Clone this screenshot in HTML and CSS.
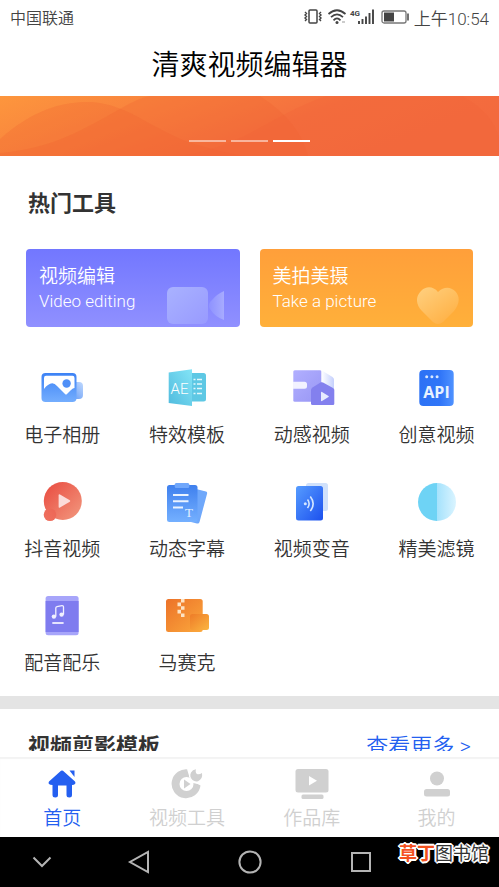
FILE: index.html
```html
<!DOCTYPE html>
<html lang="zh-CN">
<head>
    <meta charset="utf-8">
    <meta name="viewport" content="width=device-width, initial-scale=1">
    <title>清爽视频编辑器</title>
    <link rel="stylesheet" href="styles.css">
</head>
<body>
    <div class="status-bar">
        <span>中国联通</span>
        <div class="status-right">
            <svg width="74" height="20" viewBox="0 0 74 20" fill="none" stroke="#444">
                <rect x="7" y="3" width="8" height="13" rx="1" stroke-width="1.5"/>
                <path d="M3 5l1.500 1.500L3 8l1.500 1.500L3 11l1.500 1.500L3 14M19 5l-1.500 1.500L19 8l-1.500 1.500L19 11l-1.500 1.500L19 14" stroke-width="1.4"/>
                <path d="M26.500 7Q35 -.5 43.500 7M29 10.200Q35 4.500 41 10.200M31.500 13.300Q35 9.500 38.500 13.300" stroke-width="1.7"/>
                <circle cx="35" cy="15.500" r="1.500" fill="#444" stroke="none"/>
                <path d="M40 15h3" stroke="#999"/>
                <text x="48" y="9" class="net">4G</text>
                <path d="M57 17v-3M60.500 17v-5M64 17v-7.500M67.500 17V6M71 17V2.500" stroke-width="1.9"/>
            </svg>
            <svg width="28" height="20" viewBox="0 0 28 20">
                <rect x="1" y="4" width="24" height="12" rx="2" fill="none" stroke="#777" stroke-width="1.3"/>
                <path d="M3 5.500h10v9H3z" fill="#444"/>
                <path d="M27 6.500v7" stroke="#444" stroke-width="1.5"/>
            </svg>
            <span class="time">上午10:54</span>
        </div>
    </div>

    <h1>清爽视频编辑器</h1>

    <div class="banner">
        <svg class="waves" viewBox="0 0 499 60" preserveAspectRatio="none">
            <defs>
                <linearGradient id="bn" x1="0" y1="0" x2="1" y2=".3">
                    <stop offset="0" stop-color="#fd963d"/>
                    <stop offset=".35" stop-color="#f8813e"/>
                    <stop offset=".65" stop-color="#f46f3e"/>
                    <stop offset="1" stop-color="#f36a3e"/>
                </linearGradient>
            </defs>
            <path d="M0 0h499v60H0z" fill="url(#bn)"/>
            <path d="M0 43C35 12 65 5 92 6C128 9 146 29 188 46Q220 56 245 60H0z" fill="#f0602f" opacity=".25"/>
            <path d="M0 57C55 52 85 32 120 13Q138 2 150 0H260Q300 26 308 60H0z" fill="#f0602f" opacity=".25"/>
            <path d="M180 60C245 50 270 20 326 0H462Q492 16 499 42V60z" fill="#f26238" opacity=".3"/>
        </svg>
        <div class="dots"><i></i><i></i><i class="on"></i></div>
    </div>

    <main>
        <section class="tools">
            <h2>热门工具</h2>
            <div class="cards">
                <button class="card card-video">
                    <span>视频编辑</span>
                    <small>Video editing</small>
                    <svg class="card-icon" width="60" height="40" viewBox="0 0 60 40">
                        <defs>
                            <linearGradient id="cm" x1="0" y1="0" x2="1" y2="1">
                                <stop offset="0" stop-color="#a9b2ff"/>
                                <stop offset="1" stop-color="#989aff"/>
                            </linearGradient>
                            <linearGradient id="cm2">
                                <stop offset="0" stop-color="#8e92ff"/>
                                <stop offset="1" stop-color="#a7abff"/>
                            </linearGradient>
                        </defs>
                        <path d="M57 5v29Q48 31 43 23Q40 18 45 14Q50 8 57 5z" fill="url(#cm2)"/>
                        <rect y="1" width="41" height="37" rx="6" fill="url(#cm)"/>
                    </svg>
                </button>
                <button class="card card-photo">
                    <span>美拍美摄</span>
                    <small>Take a picture</small>
                    <svg class="card-icon" width="60" height="40" viewBox="0 0 60 40">
                        <defs>
                            <linearGradient id="ht" x1="0" y1="0" x2=".8" y2="1">
                                <stop offset="0" stop-color="#ffd080"/>
                                <stop offset="1" stop-color="#ffb043"/>
                            </linearGradient>
                        </defs>
                        <path d="M21 6C27 0 34 1 38 5C44 11 42 19 37 25L26 36Q21 40 16 36L5 25C-1 19-2 11 4 5C9 0 16 0 21 6z" fill="url(#ht)"/>
                    </svg>
                </button>
            </div>

            <div class="grid">
                <a href="#">
                    <svg width="48" height="44" viewBox="0 0 48 44">
                        <defs>
                            <linearGradient id="a1" x1="0" y1="0" x2="0" y2="1">
                                <stop offset="0" stop-color="#3d82f5"/>
                                <stop offset="1" stop-color="#74aefe"/>
                            </linearGradient>
                            <linearGradient id="a2" x1="0" y1="1" x2="1" y2="0">
                                <stop offset="0" stop-color="#5893f5"/>
                                <stop offset="1" stop-color="#c0d9fe"/>
                            </linearGradient>
                        </defs>
                        <rect x="30" y="16" width="15" height="17" rx="4" fill="url(#a2)"/>
                        <rect x="3.500" y="7" width="35" height="29" rx="4" fill="url(#a1)"/>
                        <path d="M6 23V12Q6 9.800 8 9.800H34.500Q36.500 9.800 36.500 12V22Q35 22 33 24L29 28Q28 29 27 28L19 20Q15 15 10 19Q8 20 6 23z" fill="#fff"/>
                        <circle cx="28.600" cy="17.500" r="4.200" fill="#4f8ff7"/>
                    </svg>
                    <span>电子相册</span>
                </a>
                <a href="#">
                    <svg width="48" height="44" viewBox="0 0 48 44">
                        <defs>
                            <linearGradient id="b1" x1="1" y1="0" x2="0" y2="1">
                                <stop offset="0" stop-color="#83e4f6"/>
                                <stop offset="1" stop-color="#50bbde"/>
                            </linearGradient>
                        </defs>
                        <rect x="24" y="7" width="19" height="28.500" rx="2.500" fill="#5ec8e4"/>
                        <path d="M5.700 6.500L29 3.200V40L5.700 37z" fill="url(#b1)"/>
                        <path d="M30.500 13.500h2M34 13.500h5M30.500 18h2M34 18h5M30.500 22.500h2M34 22.500h5M30.500 27.500h2M34 27.500h5" stroke="#e3f8fc" stroke-width="1.4"/>
                        <text x="7.500" y="27.500" class="ae">AE</text>
                    </svg>
                    <span>特效模板</span>
                </a>
                <a href="#">
                    <svg width="48" height="44" viewBox="0 0 48 44">
                        <defs>
                            <linearGradient id="c1" x1="0" y1="0" x2="1" y2="1">
                                <stop offset="0" stop-color="#b1afff"/>
                                <stop offset="1" stop-color="#9896f4"/>
                            </linearGradient>
                            <linearGradient id="c2">
                                <stop offset="0" stop-color="#fff"/>
                                <stop offset="1" stop-color="#c5d0fd"/>
                            </linearGradient>
                        </defs>
                        <rect x="5.300" y="4.300" width="28.300" height="31.400" rx="1.500" fill="url(#c1)"/>
                        <path d="M5 15.700h11.500a2.500 2.500 0 0 1 2.500 2.500v2a2.500 2.500 0 0 1-2.500 2.500H5z" fill="#f2f2ff"/>
                        <path d="M33.500 4.300L44.500 11Q46 12 46 13.500V24L33.500 16z" fill="url(#c2)"/>
                        <path d="M23 24Q23 22.500 24.500 21.500L32.500 16.500Q33.700 15.800 35 16.500L45 22Q46.300 23 46.300 24V37.500Q46.300 39 45 39H24.500Q23 39 23 37.500z" fill="#8380ee"/>
                        <path d="M33 26.500Q33 25.500 34 26L40.500 30Q41.300 30.500 40.500 31L34 35Q33 35.500 33 34.500z" fill="#e7ebff"/>
                    </svg>
                    <span>动感视频</span>
                </a>
                <a href="#">
                    <svg width="48" height="44" viewBox="0 0 48 44">
                        <defs>
                            <linearGradient id="d1" x1="0" y1="0" x2="1" y2="0">
                                <stop offset="0" stop-color="#2c72f5"/>
                                <stop offset=".6" stop-color="#3075f8"/>
                                <stop offset="1" stop-color="#4f92ff"/>
                            </linearGradient>
                        </defs>
                        <rect x="6.300" y="4" width="34.400" height="36" rx="4" fill="url(#d1)"/>
                        <circle cx="13.700" cy="10.700" r="1.500" fill="#d6e7ff"/>
                        <circle cx="18.900" cy="10.700" r="1.500" fill="#d6e7ff"/>
                        <circle cx="24.100" cy="10.700" r="1.500" fill="#d6e7ff"/>
                        <text x="23.500" y="32" class="api">API</text>
                    </svg>
                    <span>创意视频</span>
                </a>
                <a href="#">
                    <svg width="48" height="44" viewBox="0 0 48 44">
                        <defs>
                            <linearGradient id="e1" x1="0" y1="0" x2="1" y2="1">
                                <stop offset="0" stop-color="#e9493e"/>
                                <stop offset="1" stop-color="#f29a80"/>
                            </linearGradient>
                            <linearGradient id="e2" x1="0" y1="1" x2="1" y2="0">
                                <stop offset="0" stop-color="#f0705f"/>
                                <stop offset="1" stop-color="#ec6655"/>
                            </linearGradient>
                        </defs>
                        <circle cx="24.800" cy="21" r="19" fill="url(#e1)"/>
                        <circle cx="12" cy="34.700" r="6.300" fill="url(#e2)"/>
                        <path d="M20.600 15.500Q20.600 13.800 22 14.500L31.800 20.200Q32.800 21 31.800 21.800L22 27.500Q20.600 28.200 20.600 26.500z" fill="#fbdcd9"/>
                    </svg>
                    <span>抖音视频</span>
                </a>
                <a href="#">
                    <svg width="48" height="44" viewBox="0 0 48 44">
                        <defs>
                            <linearGradient id="f1" x1="0" y1="0" x2="0" y2="1">
                                <stop offset="0" stop-color="#3f80ee"/>
                                <stop offset="1" stop-color="#74b0ff"/>
                            </linearGradient>
                        </defs>
                        <path d="M33 9L43 11.500Q44.600 12 44 14L36.500 42Q36 44 34 43.500L24 41z" fill="#6fa8fb"/>
                        <rect x="4" y="5" width="30.500" height="37" rx="2.500" fill="url(#f1)"/>
                        <rect x="11.700" y="3" width="14.600" height="5" rx="1.500" fill="#70a7fb"/>
                        <path d="M10 15h15.500M10 21.300h15.500M10 27.600h10" stroke="#eaf3ff" stroke-width="2"/>
                        <text x="22" y="36.500" class="tt">T</text>
                    </svg>
                    <span>动态字幕</span>
                </a>
                <a href="#">
                    <svg width="48" height="44" viewBox="0 0 48 44">
                        <defs>
                            <linearGradient id="g1" x1="0" y1="0" x2="1" y2="1">
                                <stop offset="0" stop-color="#569cff"/>
                                <stop offset="1" stop-color="#1c50ee"/>
                            </linearGradient>
                        </defs>
                        <rect x="18" y="3" width="22" height="28" rx="2.500" fill="#d0e1fb"/>
                        <rect x="8" y="6" width="27" height="34.500" rx="2.500" fill="url(#g1)"/>
                        <circle cx="17.300" cy="23.700" r="1.500" fill="#d4e6ff"/>
                        <path d="M19.500 19.500Q22.800 23.700 19.500 28M22.300 16.500Q28 23.700 22.300 31" fill="none" stroke="#d4e6ff" stroke-width="1.6"/>
                    </svg>
                    <span>视频变音</span>
                </a>
                <a href="#">
                    <svg width="48" height="44" viewBox="0 0 48 44">
                        <defs>
                            <linearGradient id="h1">
                                <stop offset="0" stop-color="#a5e2fc"/>
                                <stop offset="1" stop-color="#daf4ff"/>
                            </linearGradient>
                        </defs>
                        <path d="M24 3a19 19 0 0 1 0 38z" fill="url(#h1)"/>
                        <path d="M24 3a19 19 0 0 0 0 38z" fill="#6ed3f5"/>
                    </svg>
                    <span>精美滤镜</span>
                </a>
                <a href="#">
                    <svg width="48" height="44" viewBox="0 0 48 44">
                        <rect x="7.600" y="2" width="33" height="39.300" rx="2.500" fill="#a7a5fa"/>
                        <path d="M7.600 7h33v31h-33z" fill="#7f7cef"/>
                        <path d="M17.800 22.500V14Q17.800 13 19 12.700L24 11.600Q25.500 11.500 25.500 13V20.500" fill="none" stroke="#f1f0ff" stroke-width="1.3"/>
                        <circle cx="15.900" cy="22.600" r="2.200" fill="#f1f0ff"/>
                        <circle cx="23.600" cy="20.600" r="2.200" fill="#f1f0ff"/>
                        <path d="M14.300 29h11.300" stroke="#f1f0ff" stroke-width="1.8"/>
                    </svg>
                    <span>配音配乐</span>
                </a>
                <a href="#">
                    <svg width="48" height="44" viewBox="0 0 48 44">
                        <defs>
                            <linearGradient id="i1" x1="0" y1="0" x2="1" y2="1">
                                <stop offset="0" stop-color="#ec7229"/>
                                <stop offset="1" stop-color="#fba83c"/>
                            </linearGradient>
                            <linearGradient id="i2" x1="0" y1="0" x2="1" y2="1">
                                <stop offset="0" stop-color="#ee7b28"/>
                                <stop offset="1" stop-color="#fbb540"/>
                            </linearGradient>
                        </defs>
                        <rect x="3" y="5" width="36.700" height="33" rx="2.500" fill="url(#i1)"/>
                        <path d="M18 5h3.500v3.600H18zM14.500 8.600H18v3.600h-3.500zM18 12.200h3.500v3.600H18zM14.500 15.800H18v3.600h-3.500zM18 19.400h3.500V23H18z" fill="#fde3c4"/>
                        <rect x="27" y="20" width="19" height="16" rx="2.500" fill="url(#i2)"/>
                    </svg>
                    <span>马赛克</span>
                </a>
            </div>
        </section>

        <section class="templates">
            <h2>视频剪影模板</h2>
            <a href="#">查看更多 &gt;</a>
        </section>
    </main>

    <nav class="tab-bar">
        <a href="#" class="active">
            <svg width="36" height="32" viewBox="0 0 36 32" fill="currentColor">
                <path d="M17 2.800Q18 2 19 2.800L31 13.500Q32 15 31 16Q30 17 28 17V27Q28 29.500 25.300 29.500Q22.500 29.500 22.500 27V17.500H14V27Q14 29.500 11.300 29.500Q8.500 29.500 8.500 27V17Q6 17 5 16Q4 15 5 13.500z"/>
                <path d="M25.500 2.500H30.500V9z"/>
            </svg>
            <span>首页</span>
        </a>
        <a href="#">
            <svg width="36" height="32" viewBox="0 0 36 32">
                <path d="M20 1.500A14.500 14.500 0 1 0 31.500 17.500L26 14.500L20 9z" fill="currentColor"/>
                <circle cx="17.500" cy="16" r="7" fill="#fff"/>
                <path d="M15 11.500L21.500 16L15 20.500z" fill="currentColor"/>
                <path d="M19 1L21.500 9L24.500 14L34 16" fill="none" stroke="#fff" stroke-width="2"/>
                <path d="M27 1.200Q26 4.500 28 6Q30 7 33 5Q34 11 29 13.200Q26 14 23.500 12Q20 8.500 22 4.500Q23.500 1.500 27 1.200z" fill="currentColor"/>
            </svg>
            <span>视频工具</span>
        </a>
        <a href="#">
            <svg width="36" height="32" viewBox="0 0 36 32">
                <rect x="1.500" y="1" width="33" height="23.500" rx="2.500" fill="currentColor"/>
                <rect x="7.500" y="26.500" width="22" height="4.500" rx="1.500" fill="currentColor"/>
                <path d="M15 8L23 12.700L15 17.500z" fill="#fff"/>
            </svg>
            <span>作品库</span>
        </a>
        <a href="#">
            <svg width="36" height="32" viewBox="0 0 36 32" fill="currentColor">
                <circle cx="18" cy="10.500" r="7"/>
                <rect x="5" y="21" width="26" height="7.500" rx="2.500"/>
            </svg>
            <span>我的</span>
        </a>
    </nav>

    <footer class="system-bar">
        <button aria-label="收起">
            <svg width="24" height="24" viewBox="0 0 24 24"><path d="M3.500 7.500L12 16L20.500 7.500"/></svg>
        </button>
        <button aria-label="返回">
            <svg width="24" height="24" viewBox="0 0 24 24"><path d="M21 2V22L3 12z"/></svg>
        </button>
        <button aria-label="主页">
            <svg width="24" height="24" viewBox="0 0 24 24"><circle cx="12" cy="12" r="10.600"/></svg>
        </button>
        <button aria-label="最近任务">
            <svg width="24" height="24" viewBox="0 0 24 24"><rect x="3" y="3" width="18" height="18"/></svg>
        </button>
        <div class="mark"><b>草丁</b>图书馆</div>
    </footer>
</body>
</html>
```
FILE: styles.css
```css
* {
    box-sizing: border-box;
}
body {
    display: flex;
    flex-direction: column;
    height: 100vh;
    margin: 0;
    background-color: #fff;
    color: #333;
    font-family: Roboto, "Noto Sans CJK SC", sans-serif;
    font-size: 19px;
    font-weight: 350;
    overflow: hidden;
}
a {
    color: inherit;
    text-decoration: none;
}
button {
    padding: 0;
    border: none;
    background: none;
    font: inherit;
    cursor: pointer;
}
svg {
    display: block;
}
h1, h2 {
    margin: 0;
}

/* status bar */
.status-bar {
    display: flex;
    justify-content: space-between;
    align-items: center;
    height: 34px;
    padding: 0 10px;
    color: #444;
    font-size: 16px;
    flex-shrink: 0;
}
.status-right {
    display: flex;
    align-items: center;
    gap: 5px;
}
.time {
    font-size: 17px;
}
.net {
    fill: #444;
    stroke: none;
    font-size: 8px;
    font-weight: bold;
}

h1 {
    height: 62px;
    color: #000;
    font-size: 28px;
    font-weight: 350;
    line-height: 64px;
    text-align: center;
    flex-shrink: 0;
}

/* banner */
.banner {
    position: relative;
    height: 60px;
    flex-shrink: 0;
}
.waves {
    width: 100%;
    height: 60px;
}
.dots {
    position: absolute;
    left: 0;
    right: 0;
    bottom: 14px;
    display: flex;
    justify-content: center;
    gap: 5px;
}
.dots i {
    width: 37px;
    height: 2px;
    background-color: rgba(255, 255, 255, 0.5);
}
.dots .on {
    background-color: #fff;
}

main {
    flex: 1;
    min-height: 0;
    overflow: hidden;
}
h2 {
    color: #333;
    font-size: 22px;
    font-weight: 700;
    line-height: 30px;
}
.tools {
    padding: 33px 0 18px;
}
.tools h2 {
    padding: 0 28px;
}

/* cards */
.cards {
    display: grid;
    grid-template-columns: 1fr 1fr;
    gap: 20px;
    padding: 30px 26px 39px;
}
.card {
    position: relative;
    display: flex;
    flex-direction: column;
    justify-content: center;
    height: 78px;
    padding: 0 13px;
    border-radius: 4px;
    color: #fff;
    text-align: left;
}
.card span {
    line-height: 26px;
}
.card small {
    font-size: 17px;
    line-height: 22px;
}
.card-video {
    background: linear-gradient(#7277ff, #9090ff);
}
.card-photo {
    background: linear-gradient(#ff9f3a, #ffb03a);
}
.card-icon {
    position: absolute;
    right: 13px;
    bottom: 1px;
}
.card-photo .card-icon {
    right: -4px;
}

/* tools grid */
.grid {
    display: grid;
    grid-template-columns: repeat(4, 1fr);
    row-gap: 30px;
}
.grid a {
    display: flex;
    flex-direction: column;
    align-items: center;
    gap: 12px;
    line-height: 28px;
}
.ae {
    fill: #fff;
    font-size: 15px;
}
.api {
    fill: #e8f2ff;
    font-family: "Open Sans", sans-serif;
    font-size: 16px;
    font-weight: bold;
    text-anchor: middle;
}
.tt {
    fill: #e3f0ff;
    font-family: "Liberation Serif", serif;
    font-size: 13px;
}

.templates {
    display: flex;
    justify-content: space-between;
    padding: 23px 28px;
    border-top: 13px solid #e4e4e4;
}
.templates a {
    color: #245ff0;
    font-size: 22px;
    line-height: 30px;
}

/* tab bar */
.tab-bar {
    display: grid;
    grid-template-columns: repeat(4, 1fr);
    height: 86px;
    padding-top: 11px;
    border-top: 6px solid #fff;
    box-shadow: inset 0 2px 1px #f3f3f3;
    flex-shrink: 0;
}
.tab-bar a {
    display: flex;
    flex-direction: column;
    align-items: center;
    gap: 6px;
    color: #d0d0d0;
    line-height: 26px;
}
.tab-bar .active {
    color: #245ff0;
}

/* system bar */
.system-bar {
    position: relative;
    display: grid;
    grid-template-columns: 83px 1fr 1fr 1fr 83px;
    height: 50px;
    background-color: #000;
    flex-shrink: 0;
}
.system-bar button {
    display: flex;
    justify-content: center;
    align-items: center;
}
.system-bar svg {
    fill: none;
    stroke: #b4b4b4;
    stroke-width: 2;
}
.mark {
    position: absolute;
    top: 4px;
    right: 10px;
    color: #333;
    font-size: 18px;
    font-weight: 400;
    line-height: 26px;
    text-shadow: 1px 1px #fff, -1px 1px #fff, 1px -1px #fff, -1px -1px #fff, 2px 0 #fff, -2px 0 #fff, 0 2px #fff, 0 -2px #fff;
}
.mark b {
    color: #f4511e;
}
```
